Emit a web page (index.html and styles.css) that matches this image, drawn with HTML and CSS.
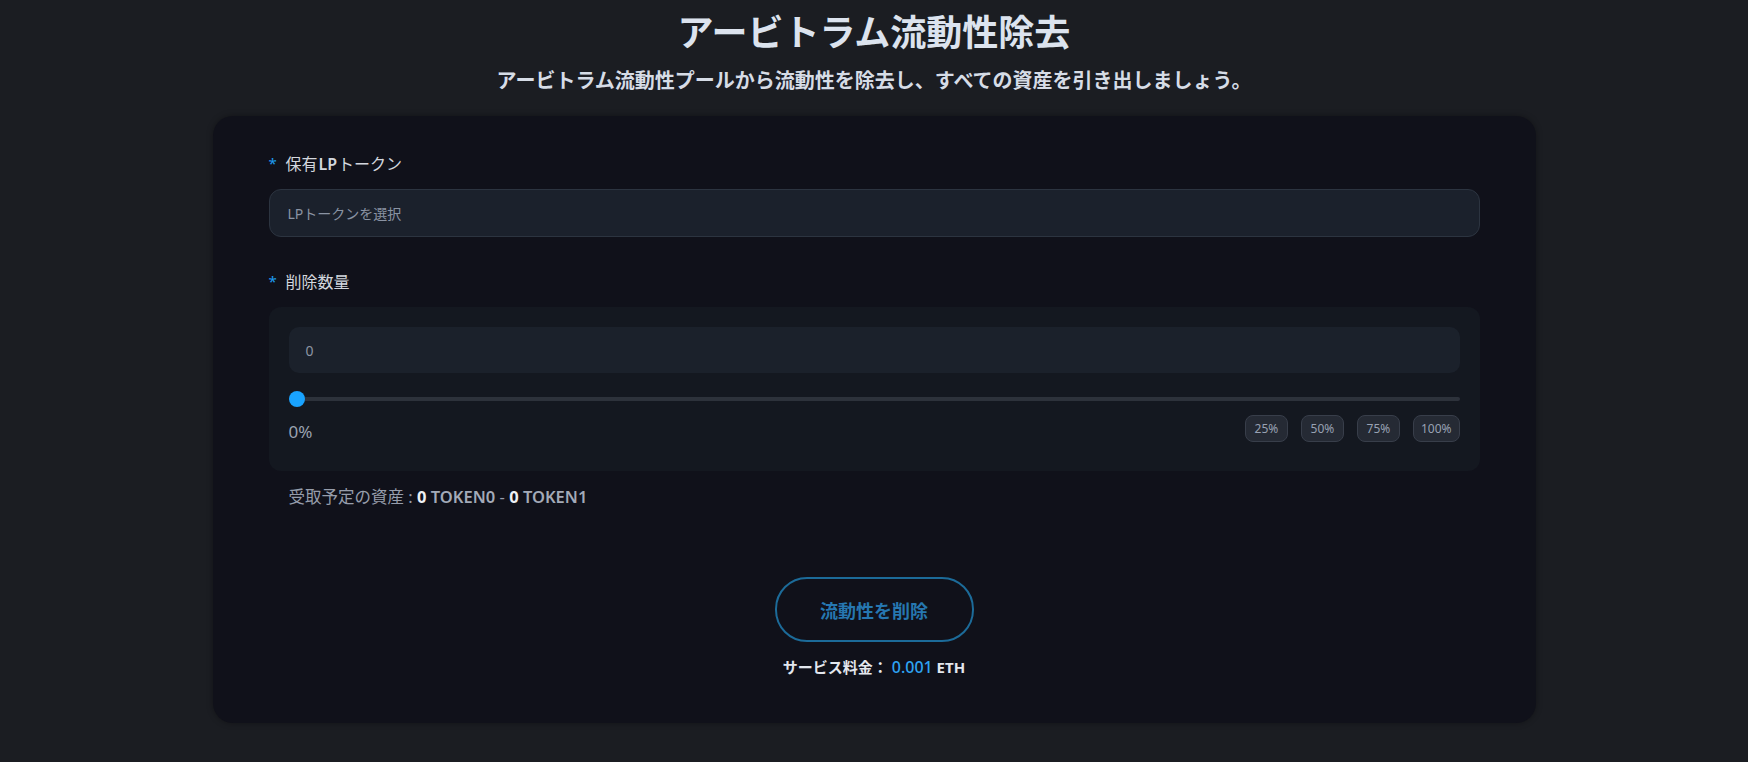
FILE: index.html
```html
<!DOCTYPE html>
<html lang="ja">
<head>
<meta charset="utf-8">
<title>アービトラム流動性除去</title>
<link rel="stylesheet" href="styles.css">
</head>
<body>
<header class="header">
  <h1 class="title">アービトラム流動性除去</h1>
  <p class="subtitle">アービトラム流動性プールから流動性を除去し、すべての資産を引き出しましょう。</p>
</header>
<main class="card">
  <div class="field">
    <label class="label"><span class="req">*</span>保有<b class="lp">LP</b>トークン</label>
    <div class="select">LPトークンを選択</div>
  </div>
  <div class="field field-amount">
    <label class="label"><span class="req">*</span>削除数量</label>
    <div class="panel">
      <div class="amount-input">0</div>
      <input class="range" type="range" min="0" max="100" value="0">
      <div class="pct-row">
        <span class="pct">0%</span>
        <div class="pct-btns">
          <button class="pct-btn">25%</button>
          <button class="pct-btn">50%</button>
          <button class="pct-btn">75%</button>
          <button class="pct-btn">100%</button>
        </div>
      </div>
    </div>
    <p class="receive">受取予定の資産 : <b class="num">0</b> <b class="tok">TOKEN0</b> - <b class="num">0</b> <b class="tok">TOKEN1</b></p>
  </div>
  <div class="actions">
    <button class="remove-btn">流動性を削除</button>
    <p class="fee">サービス料金： <span class="fee-val">0.001</span> ETH</p>
  </div>
</main>
</body>
</html>
```
FILE: styles.css
```css
* { box-sizing: border-box; }
html, body { margin: 0; }
body {
  background: #1b1d22;
  font-family: "Noto Sans", "Noto Sans CJK JP", sans-serif;
  color: #d1d5db;
  height: 762px;
  overflow: hidden;
}
.header {
  padding-top: 11px;
  text-align: center;
}
.title {
  margin: 0;
  font-size: 36px;
  line-height: 44px;
  font-weight: 700;
  color: #dce3ee;
}
.subtitle {
  margin: 12px 0 0;
  font-size: 20px;
  line-height: 28px;
  font-weight: 700;
  color: #d6dce6;
}
.card {
  width: 1323px;
  margin: 21px auto 0;
  background: #10111a;
  border-radius: 20px;
  padding: 36px 56px 46px;
  box-shadow: 0 0 6px rgba(0,0,0,0.35);
}
.field { display: flex; flex-direction: column; }
.label {
  font-size: 16px;
  line-height: 24px;
  color: #d3d7de;
  display: flex;
  align-items: center;
}
.label .lp { font-weight: 600; margin: 0 1px; }
.req {
  color: #1e9bef;
  font-size: 15px;
  width: 17px;
  margin-top: -2px;
}
.select {
  margin-top: 13px;
  height: 48px;
  border: 1px solid #2c3440;
  background: #1b212c;
  border-radius: 12px;
  padding: 0 18px;
  display: flex;
  align-items: center;
  font-size: 14px;
  color: #8a93a3;
}
.field-amount { margin-top: 33px; }
.panel {
  margin-top: 13px;
  background: #141820;
  border-radius: 12px;
  padding: 20px 20px 29px;
  display: flex;
  flex-direction: column;
}
.amount-input {
  height: 46px;
  background: #1b212b;
  border-radius: 10px;
  padding: 0 17px;
  display: flex;
  align-items: center;
  font-size: 14px;
  color: #8d95a4;
}
.range {
  -webkit-appearance: none;
  appearance: none;
  margin: 18px 0 0;
  width: 100%;
  height: 16px;
  background: transparent;
  padding: 0;
}
.range::-webkit-slider-runnable-track {
  height: 4px;
  background: #2d323b;
  border-radius: 2px;
}
.range::-webkit-slider-thumb {
  -webkit-appearance: none;
  width: 16px;
  height: 16px;
  border-radius: 50%;
  background: #19a3ff;
  border: none;
  margin-top: -6px;
}
.pct-row {
  margin-top: 8px;
  display: flex;
  justify-content: space-between;
  align-items: center;
  height: 27px;
}
.pct {
  font-size: 17px;
  color: #9aa2b0;
  margin-top: 5px;
}
.pct-btns { display: flex; gap: 13px; }
.pct-btn {
  height: 27px;
  min-width: 43px;
  padding: 0 7px;
  background: #252a34;
  border: 1px solid #383e4a;
  border-radius: 8px;
  color: #98a1b3;
  font-family: inherit;
  font-size: 12px;
  line-height: 1;
}
.receive {
  margin: 14px 0 0;
  padding-left: 20px;
  font-size: 16.5px;
  line-height: 24px;
  color: #969dab;
}
.receive .num { color: #eef1f5; font-weight: 700; }
.receive .tok { color: #a3aab8; font-weight: 600; }
.actions {
  margin-top: 68px;
  display: flex;
  flex-direction: column;
  align-items: center;
}
.remove-btn {
  width: 199px;
  height: 65px;
  border: 2px solid #1c6b99;
  border-radius: 32px;
  background: transparent;
  color: #2677b0;
  font-family: inherit;
  font-size: 18px;
  font-weight: 700;
}
.fee {
  margin: 15px 0 0;
  font-size: 15px;
  line-height: 20px;
  font-weight: 700;
  color: #e3e7ee;
}
.fee-val { color: #2ea3f2; font-weight: 500; font-size: 16px; }
```
